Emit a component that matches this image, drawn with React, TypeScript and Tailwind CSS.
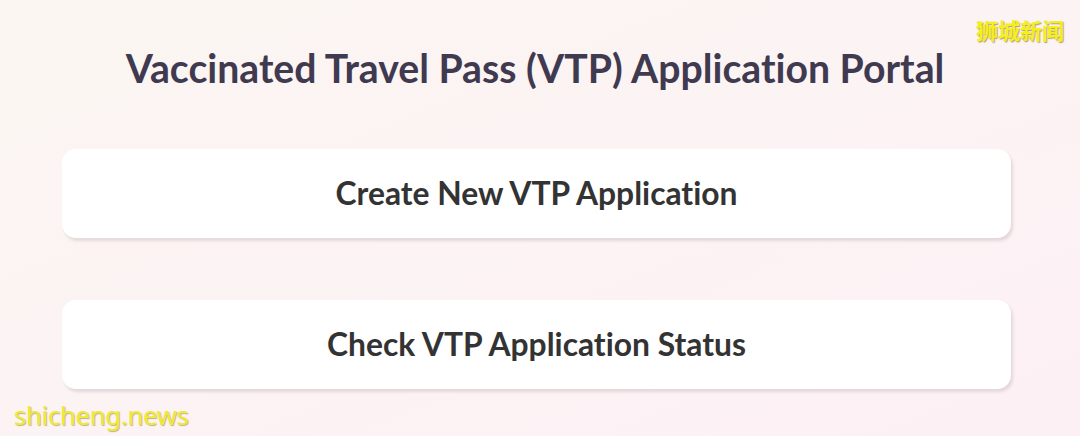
export default function App() {
  return (
    <div className="relative h-[436px] w-[1080px] overflow-hidden bg-gradient-to-br from-[#fbf6f2] to-[#fdf0f5] font-['Lato',sans-serif] [font-variant-ligatures:none]">
      <div className="flex flex-col items-center pt-[38px]">
        <h1 className="text-[39.2px] font-bold leading-[60px] text-[#403a50] pr-[10px]">
          Vaccinated Travel Pass (VTP) Application Portal
        </h1>
        <div className="mt-[51px] flex w-[949px] flex-col gap-[62px] self-start ml-[62px]">
          <button className="flex h-[89px] items-center justify-center rounded-[14px] bg-white text-[31.8px] font-bold text-[#333333] shadow-[2px_3px_3px_rgba(120,100,100,0.18)] [font-variant-ligatures:none]">
            Create New VTP Application
          </button>
          <button className="flex h-[89px] items-center justify-center rounded-[14px] bg-white text-[31.8px] font-bold text-[#333333] shadow-[2px_3px_3px_rgba(120,100,100,0.18)] [font-variant-ligatures:none]">
            Check VTP Application Status
          </button>
        </div>
      </div>
      <div className="absolute right-[16px] top-[18px] text-[22px] font-bold text-[#f5ef1e] [text-shadow:1px_1px_1px_rgba(110,90,0,0.55)] font-['Noto_Sans_CJK_SC',sans-serif] leading-none">
        狮城新闻
      </div>
      <div className="absolute bottom-[8px] left-[14px] text-[25.5px] text-[#f0ea30] [text-shadow:1px_1px_1px_rgba(120,100,0,0.45)] font-['Noto_Sans',sans-serif] leading-none tracking-[-0.2px]">
        shicheng.news
      </div>
    </div>
  );
}
